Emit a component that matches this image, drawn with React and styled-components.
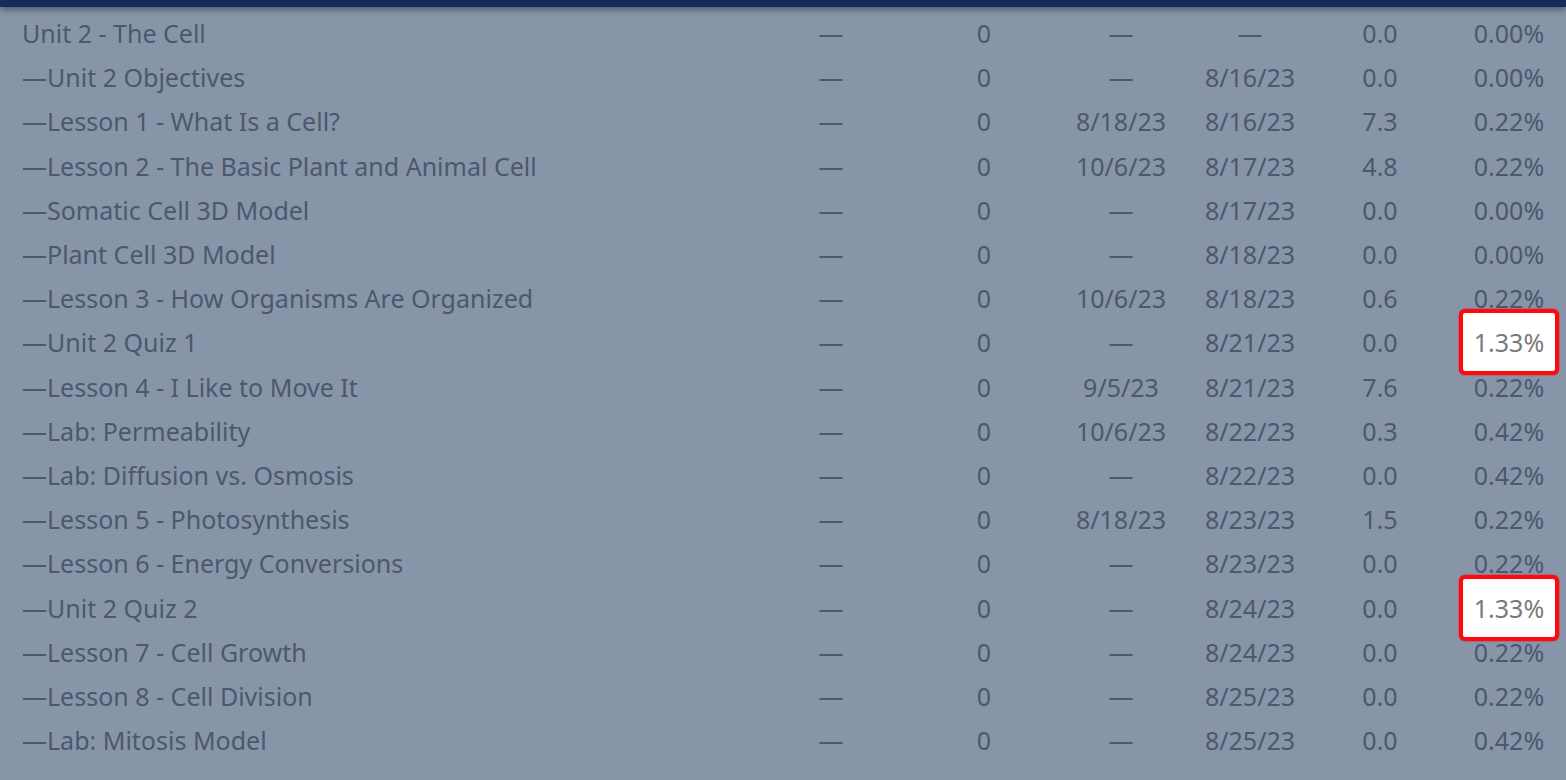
import React from "react";
import styled, { createGlobalStyle } from "styled-components";

const GlobalStyle = createGlobalStyle`
  html, body {
    margin: 0;
    padding: 0;
    background: #8895a8;
  }
  body {
    font-family: "Noto Sans", "Open Sans", sans-serif;
    overflow: hidden;
  }
`;

const Page = styled.div`
  width: 1566px;
  height: 780px;
  background: #8895a8;
  overflow: hidden;
`;

const TopBar = styled.div`
  height: 7px;
  background: #152c58;
  box-shadow: 0 2px 7px rgba(20, 30, 50, 0.6);
  position: relative;
  z-index: 1;
`;

const Table = styled.div`
  padding-top: 4px;
`;

const Row = styled.div`
  display: grid;
  grid-template-columns: 1fr 174px 132px 142px 116px 144px 114px;
  height: 44.2px;
  align-items: center;
  color: #4b586d;
  font-size: 25px;
`;

const Name = styled.div`
  padding-left: 22px;
  white-space: nowrap;
`;

const Cell = styled.div`
  text-align: center;
  white-space: nowrap;
`;

const Spot = styled.span`
  display: inline-block;
  position: relative;
  z-index: 2;
  padding: 12px 11px;
  margin: -17px -15px;
  background: #ffffff;
  color: #7a7a7a;
  border: 4px solid #ff0a0a;
  border-radius: 6px;
  box-shadow: 0 0 2px rgba(255, 0, 0, 0.7), 0 0 1px rgba(0, 0, 0, 0.3);
`;

const rows = [
  ["Unit 2 - The Cell", "—", "0", "—", "—", "0.0", "0.00%"],
  ["—Unit 2 Objectives", "—", "0", "—", "8/16/23", "0.0", "0.00%"],
  ["—Lesson 1 - What Is a Cell?", "—", "0", "8/18/23", "8/16/23", "7.3", "0.22%"],
  ["—Lesson 2 - The Basic Plant and Animal Cell", "—", "0", "10/6/23", "8/17/23", "4.8", "0.22%"],
  ["—Somatic Cell 3D Model", "—", "0", "—", "8/17/23", "0.0", "0.00%"],
  ["—Plant Cell 3D Model", "—", "0", "—", "8/18/23", "0.0", "0.00%"],
  ["—Lesson 3 - How Organisms Are Organized", "—", "0", "10/6/23", "8/18/23", "0.6", "0.22%"],
  ["—Unit 2 Quiz 1", "—", "0", "—", "8/21/23", "0.0", "1.33%", true],
  ["—Lesson 4 - I Like to Move It", "—", "0", "9/5/23", "8/21/23", "7.6", "0.22%"],
  ["—Lab: Permeability", "—", "0", "10/6/23", "8/22/23", "0.3", "0.42%"],
  ["—Lab: Diffusion vs. Osmosis", "—", "0", "—", "8/22/23", "0.0", "0.42%"],
  ["—Lesson 5 - Photosynthesis", "—", "0", "8/18/23", "8/23/23", "1.5", "0.22%"],
  ["—Lesson 6 - Energy Conversions", "—", "0", "—", "8/23/23", "0.0", "0.22%"],
  ["—Unit 2 Quiz 2", "—", "0", "—", "8/24/23", "0.0", "1.33%", true],
  ["—Lesson 7 - Cell Growth", "—", "0", "—", "8/24/23", "0.0", "0.22%"],
  ["—Lesson 8 - Cell Division", "—", "0", "—", "8/25/23", "0.0", "0.22%"],
  ["—Lab: Mitosis Model", "—", "0", "—", "8/25/23", "0.0", "0.42%"],
];

export default function App() {
  return (
    <Page>
      <GlobalStyle />
      <TopBar />
      <Table>
        {rows.map(([name, a, b, c, d, e, f, hot]) => (
          <Row key={name}>
            <Name>{name}</Name>
            <Cell>{a}</Cell>
            <Cell>{b}</Cell>
            <Cell>{c}</Cell>
            <Cell>{d}</Cell>
            <Cell>{e}</Cell>
            <Cell>{hot ? <Spot>{f}</Spot> : f}</Cell>
          </Row>
        ))}
      </Table>
    </Page>
  );
}
